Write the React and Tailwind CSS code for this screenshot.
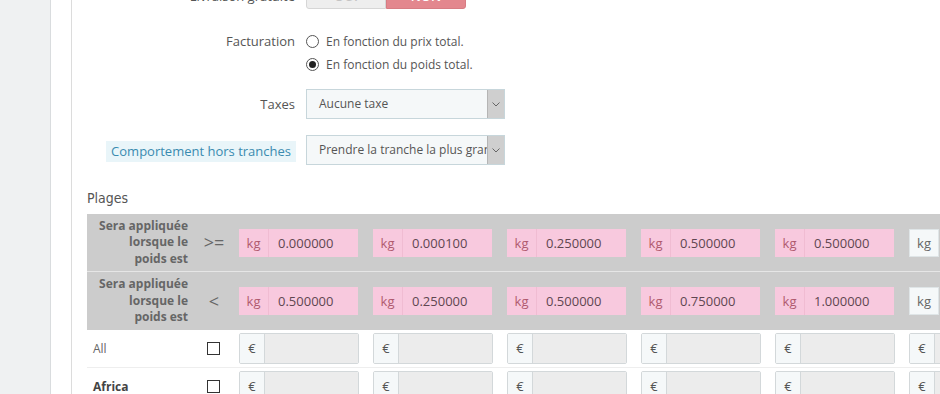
import React from "react";

const minRow = ["0.000000", "0.000100", "0.250000", "0.500000", "0.500000", ""];
const maxRow = ["0.500000", "0.250000", "0.500000", "0.750000", "1.000000", ""];
const zones = [
  { name: "All", bold: false },
  { name: "Africa", bold: true },
];

const Chevron = () => (
  <svg width="8" height="5" viewBox="0 0 8 5" className="text-[#666]">
    <path d="M0.5 0.5 L4 4 L7.5 0.5" fill="none" stroke="currentColor" strokeWidth="1" />
  </svg>
);

const Select = ({ value }) => (
  <div className="flex h-[30px] w-[199px] border border-[#c7d6db] bg-[#f5f8f9]">
    <div className="flex-1 overflow-hidden whitespace-nowrap pl-[12px] text-[12px] leading-[28px] text-[#555]">
      {value}
    </div>
    <div className="flex w-[17px] items-center justify-center border-l border-[#b5b5b5] bg-[#cfcfcf]">
      <Chevron />
    </div>
  </div>
);

const Radio = ({ checked, label }) => (
  <label className="flex h-[23px] items-center gap-[7px] text-[12px] text-[#555]">
    <span className="flex h-[13px] w-[13px] items-center justify-center rounded-full border border-[#555] bg-white">
      {checked && <span className="h-[7px] w-[7px] rounded-full bg-[#222]" />}
    </span>
    {label}
  </label>
);

const KgInput = ({ value }) =>
  value ? (
    <div className="flex h-[28px] w-[119px] shrink-0 bg-[#f8c9de] text-[13px] leading-[28px]">
      <div className="w-[30px] border-r border-[#f0bcd2] text-center text-[#b05a6e]">kg</div>
      <div className="flex-1 pl-[9px] text-[#5f4650]">{value}</div>
    </div>
  ) : (
    <div className="flex h-[28px] w-[119px] shrink-0 text-[13px] leading-[26px]">
      <div className="w-[30px] border border-[#dfe5e7] bg-[#f5f8f9] text-center text-[#666]">kg</div>
    </div>
  );

const EuroInput = () => (
  <div className="flex h-[31px] w-[120px] shrink-0 overflow-hidden rounded-[2px] border border-[#d3d8da] text-[13px] leading-[29px]">
    <div className="w-[25px] border-r border-[#d3d8da] bg-[#f5f8f9] text-center text-[#555]">€</div>
    <div className="flex-1 bg-[#ececec]" />
  </div>
);

const RangeRow = ({ op, values, border }) => (
  <div className={`flex h-[58px] items-center bg-[#cccccc] ${border ? "border-b border-[#e6e6e6]" : ""}`}>
    <div className="w-[108px] shrink-0 pr-[7px] text-right text-[12px] font-bold leading-[16.5px] text-[#666]">
      Sera appliquée
      <br />
      lorsque le
      <br />
      poids est
    </div>
    <div className="w-[44px] shrink-0 pl-[7px]">
      <div className="w-[24px] text-center text-[18px] text-[#666]">{op}</div>
    </div>
    <div className="flex gap-[15px]">
      {values.map((v, i) => (
        <KgInput key={i} value={v} />
      ))}
    </div>
  </div>
);

export default function App() {
  return (
    <div
      className="flex h-[394px] w-[940px] overflow-hidden bg-white"
      style={{ fontFamily: '"Open Sans", "Noto Sans", sans-serif' }}
    >
      <div className="w-[51px] shrink-0 border-r border-[#d9dcde] bg-[#eff1f2]" />
      <div className="w-[21px] shrink-0 border-r border-[#dcdcdc] bg-white" />
      <div className="min-w-0 flex-1">
        {/* form rows */}
        <div className="mt-[-21px] grid grid-cols-[224px_1fr] items-start gap-x-[10px]">
          <div className="h-[30px] pr-[1px] pt-[5px] text-right text-[13px] leading-[25px] text-[#555]">
            Livraison gratuite
          </div>
          <div className="flex h-[30px] w-[160px] text-[13px] font-semibold leading-[33px]">
            <div className="w-[80px] overflow-hidden rounded-bl-[3px] border border-[#d6d6d6] bg-[#eeeeee] text-center text-[#c4c4c4]">
              OUI
            </div>
            <div className="w-[80px] overflow-hidden rounded-br-[3px] border border-[#d77c83] bg-[#e3878e] text-center text-white">
              NON
            </div>
          </div>

          <div className="mt-[21px] pr-[1px] text-right text-[13px] leading-[23px] text-[#555]">Facturation</div>
          <div className="mt-[21px] flex flex-col">
            <Radio label="En fonction du prix total." />
            <Radio checked label="En fonction du poids total." />
          </div>

          <div className="mt-[13px] pr-[1px] text-right text-[13px] leading-[30px] text-[#555]">Taxes</div>
          <div className="mt-[13px]">
            <Select value="Aucune taxe" />
          </div>

          <div className="mt-[16px] flex justify-end">
            <span className="mt-[6px] bg-[#e9f5f9] px-[5px] text-[13px] leading-[21px] text-[#3a8bb0]">
              Comportement hors tranches
            </span>
          </div>
          <div className="mt-[16px]">
            <Select value="Prendre la tranche la plus grande" />
          </div>
        </div>

        {/* ranges */}
        <div className="pl-[15px]">
          <div
            className="mb-[3px] mt-[20px] h-[26px] text-[14px] leading-[26px] text-[#555]"
            style={{ fontFamily: '"DejaVu Sans Condensed", "Liberation Sans Narrow", "Open Sans", sans-serif' }}
          >
            Plages
          </div>
          <div className="w-max">
            <RangeRow op=">=" values={minRow} border />
            <RangeRow op="<" values={maxRow} />
            {zones.map((z) => (
              <div key={z.name} className="flex h-[38px] items-center border-b border-[#eeeeee]">
                <div
                  className={`w-[120px] shrink-0 pl-[6px] text-[12px] ${z.bold ? "font-bold text-[#444]" : "text-[#666]"}`}
                >
                  {z.name}
                </div>
                <div className="w-[32px] shrink-0">
                  <span className="block h-[13px] w-[13px] border border-[#333] bg-white" />
                </div>
                <div className="flex gap-[14px]">
                  {minRow.map((_, i) => (
                    <EuroInput key={i} />
                  ))}
                </div>
              </div>
            ))}
          </div>
        </div>
      </div>
    </div>
  );
}
